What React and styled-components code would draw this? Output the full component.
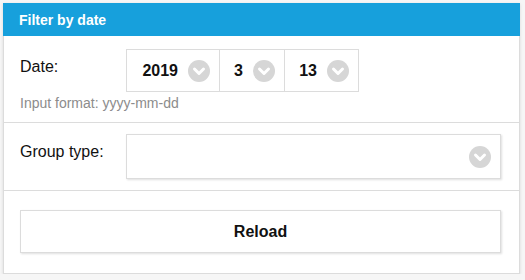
import React from "react";
import styled, { createGlobalStyle } from "styled-components";

const GlobalStyle = createGlobalStyle`
  body {
    margin: 0;
    background: #f6f6f6;
    font-family: "Liberation Sans", Arial, sans-serif;
    color: #111;
  }
`;

const Panel = styled.div`
  width: 517px;
  margin: 3px 0 0 3px;
  background: #fff;
  border: 1px solid #dcdcdc;
  border-top: none;
  box-sizing: border-box;
  box-shadow: 0 1px 3px rgba(0, 0, 0, 0.12);
`;

const Header = styled.div`
  height: 33px;
  display: flex;
  align-items: center;
  padding: 0 16px;
  margin: 0 -1px;
  background: #17a0dc;
  color: #fff;
  font-weight: bold;
  font-size: 14px;
`;

const Section = styled.div`
  padding: ${(p) => p.pad};
  border-top: ${(p) => (p.first ? "none" : "1px solid #dcdcdc")};
`;

const Row = styled.div`
  display: flex;
  align-items: flex-start;
`;

const Label = styled.div`
  width: 106px;
  flex-shrink: 0;
  font-size: 16px;
  line-height: 18px;
  padding-top: 9px;
`;

const DateBox = styled.div`
  display: flex;
  height: 43px;
  border: 1px solid #dcdcdc;
  box-sizing: border-box;
`;

const Segment = styled.div`
  width: ${(p) => p.w}px;
  display: flex;
  align-items: center;
  justify-content: flex-end;
  gap: 10px;
  padding-right: 9px;
  box-sizing: border-box;
  border-left: ${(p) => (p.first ? "none" : "1px solid #dcdcdc")};
  font-weight: bold;
  font-size: 16px;
`;

const Hint = styled.div`
  margin-top: 3px;
  font-size: 14px;
  line-height: 16px;
  color: #8c8c8c;
`;

const Select = styled.div`
  flex: 1;
  height: 45px;
  display: flex;
  align-items: center;
  justify-content: flex-end;
  padding-right: 9px;
  border: 1px solid #dcdcdc;
  box-sizing: border-box;
  box-shadow: 1px 1px 2px rgba(0, 0, 0, 0.13);
`;

const Button = styled.div`
  height: 43px;
  display: flex;
  align-items: center;
  justify-content: center;
  border: 1px solid #dcdcdc;
  box-sizing: border-box;
  box-shadow: 1px 1px 2px rgba(0, 0, 0, 0.13);
  font-weight: bold;
  font-size: 16px;
`;

const Chevron = () => (
  <svg width="22" height="22" viewBox="0 0 22 22">
    <circle cx="11" cy="11" r="11" fill="#d6d6d6" />
    <path
      d="M6.5 9 L11 13.5 L15.5 9"
      fill="none"
      stroke="#fff"
      strokeWidth="3"
      strokeLinecap="round"
      strokeLinejoin="round"
    />
  </svg>
);

const parts = [
  { value: "2019", w: 92 },
  { value: "3", w: 65 },
  { value: "13", w: 74 },
];

export default function App() {
  return (
    <>
      <GlobalStyle />
      <Panel>
        <Header>Filter by date</Header>
        <Section first pad="13px 18px 11px 16px">
          <Row>
            <Label>Date:</Label>
            <DateBox>
              {parts.map((p, i) => (
                <Segment key={i} w={p.w} first={i === 0}>
                  {p.value}
                  <Chevron />
                </Segment>
              ))}
            </DateBox>
          </Row>
          <Hint>Input format: yyyy-mm-dd</Hint>
        </Section>
        <Section pad="11px 18px 11px 16px">
          <Row>
            <Label>Group type:</Label>
            <Select>
              <Chevron />
            </Select>
          </Row>
        </Section>
        <Section pad="19px 18px 20px 16px">
          <Button>Reload</Button>
        </Section>
      </Panel>
    </>
  );
}
